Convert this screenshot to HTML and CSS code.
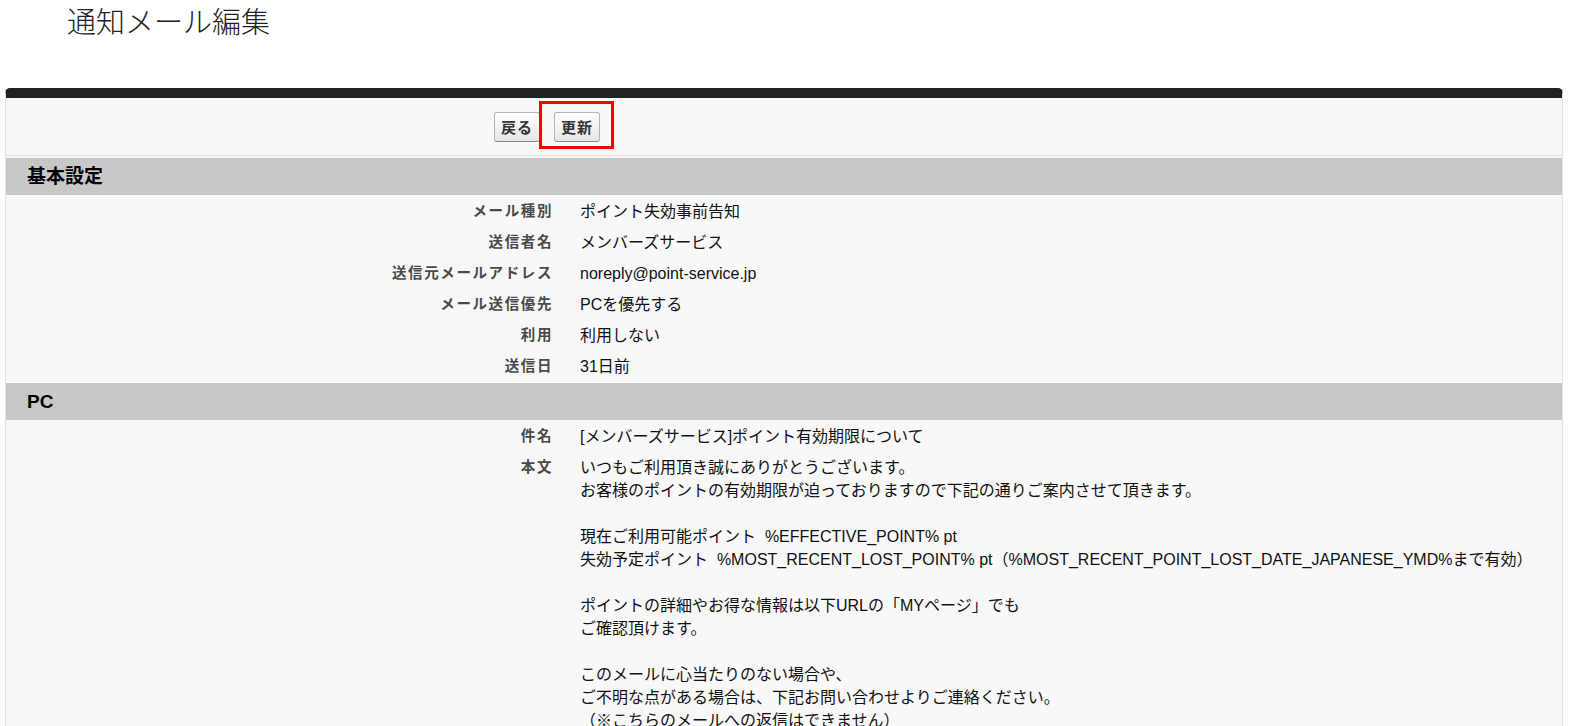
FILE: index.html
```html
<!DOCTYPE html>
<html lang="ja">
<head>
  <meta charset="UTF-8">
  <title>通知メール編集</title>
  <link rel="stylesheet" href="styles.css">
</head>
<body>
  <h1 class="page-title">通知メール編集</h1>

  <div class="panel">
    <!-- ボタン -->
    <div class="button-bar">
      <button class="btn">戻る</button>
      <span class="highlight"><button class="btn">更新</button></span>
    </div>

    <h2 class="section-title">基本設定</h2>
    <dl class="detail-list">
      <dt>メール種別</dt><dd>ポイント失効事前告知</dd>
      <dt>送信者名</dt><dd>メンバーズサービス</dd>
      <dt>送信元メールアドレス</dt><dd>noreply@point-service.jp</dd>
      <dt>メール送信優先</dt><dd>PCを優先する</dd>
      <dt>利用</dt><dd>利用しない</dd>
      <dt>送信日</dt><dd>31日前</dd>
    </dl>

    <h2 class="section-title">PC</h2>
    <dl class="detail-list">
      <dt>件名</dt><dd>[メンバーズサービス]ポイント有効期限について</dd>
      <dt>本文</dt>
      <dd class="mail-body">いつもご利用頂き誠にありがとうございます。
お客様のポイントの有効期限が迫っておりますので下記の通りご案内させて頂きます。

現在ご利用可能ポイント  %EFFECTIVE_POINT% pt
失効予定ポイント  %MOST_RECENT_LOST_POINT% pt（%MOST_RECENT_POINT_LOST_DATE_JAPANESE_YMD%まで有効）

ポイントの詳細やお得な情報は以下URLの「MYページ」でも
ご確認頂けます。

このメールに心当たりのない場合や、
ご不明な点がある場合は、下記お問い合わせよりご連絡ください。
（※こちらのメールへの返信はできません）</dd>
    </dl>
  </div>
</body>
</html>
```

FILE: styles.css
```css
body {
  margin: 0;
  font-family: "Liberation Sans", "Noto Sans CJK JP", sans-serif;
  background: #fff;
  color: #111;
}

.page-title {
  margin: 0 0 45px;
  padding: 4px 0 0 67px;
  font-size: 29px;
  line-height: 39px;
  font-weight: 300;
  color: #222;
}

.panel {
  margin: 0 9px 0 5px;
  background: #f8f8f8;
  border: 1px solid #e2e2e2;
  border-top: 10px solid #222;
  border-radius: 5px 5px 0 0;
}

.button-bar {
  display: flex;
  align-items: center;
  gap: 14px;
  height: 57px;
  padding-left: 488px;
  border-bottom: 1px solid #e0e0e0;
}

.btn {
  height: 30px;
  padding: 0 6px;
  font-family: "Noto Sans CJK JP", sans-serif;
  font-size: 15px;
  font-weight: bold;
  letter-spacing: 1px;
  color: #333;
  background: linear-gradient(#ffffff, #e6e6e6);
  border: 1px solid #b5b5b5;
  border-bottom-color: #8a8a8a;
  border-radius: 3px;
  cursor: pointer;
}

.highlight {
  position: relative;
  display: inline-flex;
}

.highlight::after {
  content: "";
  position: absolute;
  top: -11px;
  bottom: -7px;
  left: -15px;
  right: -14px;
  border: 3px solid #ff0000;
}

.section-title {
  margin: 2px 0 0;
  height: 37px;
  padding-left: 21px;
  background: #c8c8c8;
  font-size: 19px;
  font-weight: bold;
  line-height: 37px;
  color: #000;
}

.detail-list {
  display: grid;
  grid-template-columns: 557px 1fr;
  margin: 0;
}

.detail-list dt {
  padding: 5px 10px 3px 0;
  text-align: right;
  font-size: 14.5px;
  font-weight: bold;
  letter-spacing: 1.6px;
  line-height: 23px;
  color: #4a4a4a;
}

.detail-list dd {
  margin: 0;
  padding: 5px 0 3px 17px;
  font-size: 16px;
  line-height: 23px;
  color: #111;
}

.mail-body {
  white-space: pre-wrap;
  line-height: 22.6px;
}
```
